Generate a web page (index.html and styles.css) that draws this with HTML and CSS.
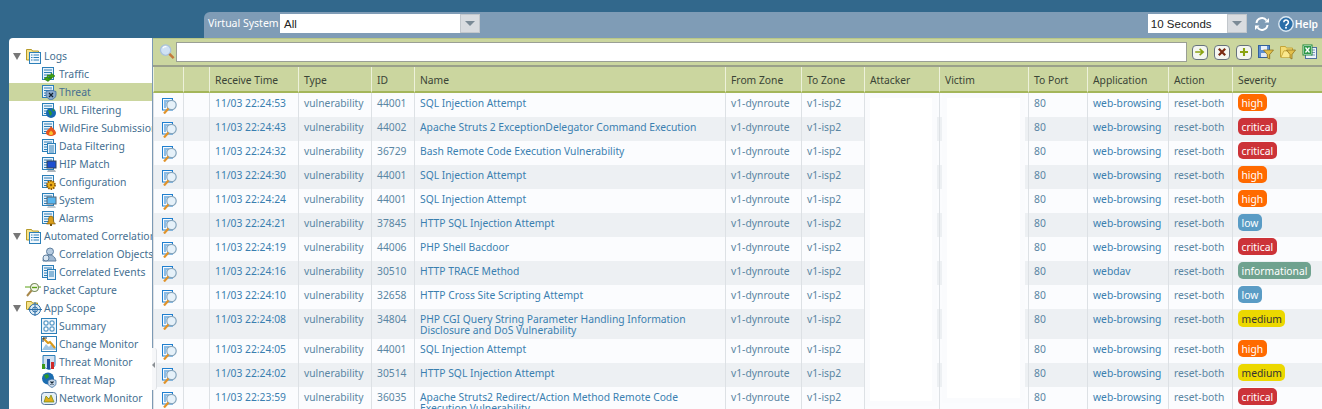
FILE: index.html
```html
<!DOCTYPE html>
<html lang="en">
<head>
<meta charset="utf-8">
<title>Threat Logs</title>
<link rel="stylesheet" href="styles.css">
</head>
<body>
<svg class="defs" width="0" height="0" aria-hidden="true">
  <symbol id="doc" viewBox="0 0 16 16"><rect x="1.5" y="1.5" width="11" height="12" fill="#eaf3fb" stroke="#2c7fb8"/><path d="M3 4h8M3 6.5h8M3 9h8M3 11.5h8" stroke="#2c7fb8"/></symbol>
  <symbol id="folder" viewBox="0 0 16 16"><path d="M.5 3V1.5h5l1 1.500h6v9h-12z" fill="#f6e28a" stroke="#b59a2a"/><rect x="3.500" y="4.500" width="11" height="11" fill="#f2f8fd" stroke="#2c7fb8"/><path d="M5 7h1.500M7.500 7H13M5 9.500h1.500M7.500 9.500H13M5 12h1.500M7.500 12H13" stroke="#2c7fb8"/></symbol>
  <symbol id="mag" viewBox="0 0 16 16"><rect x=".5" y=".5" width="10" height="11.500" fill="#f6fafe" stroke="#1f7fd0"/><path d="M2 3h6M2 5h2.500M2 7h2M2 9h2" stroke="#1f7fd0"/><circle cx="9.500" cy="7" r="4.700" fill="#e6f1f9" stroke="#86a5bc" stroke-width="1.200"/><path d="M6.500 10.500L2 15.500" stroke="#e0932a" stroke-width="2.200"/></symbol>
</svg>

<header class="topbar">
  <div class="vsys">
    <span class="vsys-label">Virtual System</span>
    <div class="combo combo-wide"><span class="combo-text">All</span><span class="combo-btn"></span></div>
    <div class="top-right">
      <div class="combo combo-small"><span class="combo-text">10 Seconds</span><span class="combo-btn"></span></div>
      <svg class="refresh" viewBox="0 0 16 16" width="16" height="16"><path d="M2.500 7a5.500 5.500 0 0 1 10-2.500M13.500 9a5.500 5.500 0 0 1-10 2.500" fill="none" stroke="#fff" stroke-width="2"/><path d="M15 2v4.500h-4.500zM1 14V9.500h4.500z" fill="#fff"/></svg>
      <svg class="help-icon" viewBox="0 0 16 16" width="16" height="16"><circle cx="8" cy="8" r="7.200" fill="#2a6ea8" stroke="#dbe8f2" stroke-width="1.400"/><path d="M5.800 6.200a2.300 2.200 0 1 1 3.400 2c-.9.500-1.200.9-1.200 1.700" fill="none" stroke="#fff" stroke-width="1.600"/><rect x="7.100" y="10.800" width="1.800" height="1.800" fill="#fff"/></svg>
      <span class="help-label">Help</span>
    </div>
  </div>
</header>

<div class="workspace">
  <nav class="sidebar">
    <div class="node lvl1"><span class="twist"></span><svg class="ico"><use href="#folder"/></svg><span>Logs</span></div>
    <div class="node lvl2"><svg class="ico" viewBox="0 0 16 16"><use href="#doc"/><path d="M6 9h4V7l4 3-4 2.500zM11 12H7v-2l-4 3 4 2.500z" fill="#3ea012" stroke="#1f6d06" stroke-width=".5"/></svg><span>Traffic</span></div>
    <div class="node lvl2 active"><svg class="ico" viewBox="0 0 16 16"><use href="#doc"/><path d="M5 7.500l5-1.500 5 1.500v3.500c0 2.500-2.500 4-5 5-2.500-1-5-2.500-5-5z" fill="#8aa9cc" stroke="#3c6ea3" stroke-width=".8"/><path d="M8 9l4 4M12 9l-4 4" stroke="#123" stroke-width="1.200"/></svg><span>Threat</span></div>
    <div class="node lvl2"><svg class="ico" viewBox="0 0 16 16"><use href="#doc"/><circle cx="10" cy="11" r="5" fill="#1668b0"/><path d="M7 8l3 1 1 3-2 2-1-3zM11 6.500l3 2-2 1z" fill="#2e9a2a"/></svg><span>URL Filtering</span></div>
    <div class="node lvl2"><svg class="ico" viewBox="0 0 16 16"><use href="#doc"/><path d="M10 6c1 2 5 4 5 7a5 3 0 0 1-10 0c0-3 4-4 5-7z" fill="#e8531c"/><path d="M10 10.500c.5 1 2 1.500 2 3a2 1.500 0 0 1-4 0c0-1 1.500-2 2-3z" fill="#f7c531"/></svg><span>WildFire Submissions</span></div>
    <div class="node lvl2"><svg class="ico" viewBox="0 0 16 16"><use href="#doc"/><rect x="6.500" y="5.500" width="8" height="10" fill="#e6f1f9" stroke="#2c7fb8"/><path d="M8 8h5M8 10h5M8 12h5M8 14h5" stroke="#2c7fb8"/></svg><span>Data Filtering</span></div>
    <div class="node lvl2"><svg class="ico" viewBox="0 0 16 16"><use href="#doc"/><rect x="6" y="5" width="9" height="7" fill="#1d4fd0" stroke="#345"/><path d="M7 14h7l1 2H6z" fill="#aab4bd"/></svg><span>HIP Match</span></div>
    <div class="node lvl2"><svg class="ico" viewBox="0 0 16 16"><use href="#doc"/><circle cx="10" cy="11" r="4" fill="#efb118" stroke="#8f5a08" stroke-width="1.800" stroke-dasharray="1.500 1"/><circle cx="10" cy="11" r="1.300" fill="#8f5a08"/></svg><span>Configuration</span></div>
    <div class="node lvl2"><svg class="ico" viewBox="0 0 16 16"><use href="#doc"/><rect x="6" y="5" width="9" height="7" fill="#58b5ee" stroke="#567"/><path d="M7 14h7l1 2H6z" fill="#c3cbd2"/></svg><span>System</span></div>
    <div class="node lvl2"><svg class="ico" viewBox="0 0 16 16"><use href="#doc"/><path d="M10 6c2 0 2.500 2 2.500 4 0 2 1 3 2 4H5.500c1-1 2-2 2-4 0-2 .5-4 2.500-4z" fill="#d99d1a" stroke="#7a5408" stroke-width=".6"/><rect x="9" y="14" width="2" height="2" fill="#7a5408"/></svg><span>Alarms</span></div>
    <div class="node lvl1"><span class="twist"></span><svg class="ico"><use href="#folder"/></svg><span>Automated Correlation Engine</span></div>
    <div class="node lvl2"><svg class="ico" viewBox="0 0 16 16"><circle cx="9" cy="5.500" r="3.500" fill="#b6cbe0" stroke="#5f7f9f"/><path d="M2 15c0-5 3-6 6-6s6 1 7 6z" fill="#9fb8d2" stroke="#5f7f9f"/><circle cx="5" cy="12" r="3" fill="#dbe7f2" stroke="#5f7f9f"/></svg><span>Correlation Objects</span></div>
    <div class="node lvl2"><svg class="ico" viewBox="0 0 16 16"><use href="#doc"/><rect x="6.500" y="5.500" width="8" height="10" fill="#e6f1f9" stroke="#2c7fb8"/><path d="M8 8h5M8 10h5M8 12h5" stroke="#2c7fb8"/></svg><span>Correlated Events</span></div>
    <div class="node lvl1 plain"><svg class="ico" viewBox="0 0 16 16"><path d="M0 5h16" stroke="#5aa015"/><circle cx="9.500" cy="5.500" r="4" fill="#f4f8ea" stroke="#7d8f60" stroke-width="1.200"/><path d="M6.500 8.500L2 14" stroke="#a8884a" stroke-width="2"/><path d="M7 5.500h5" stroke="#5aa015" stroke-width="1.400"/></svg><span>Packet Capture</span></div>
    <div class="node lvl1"><span class="twist"></span><svg class="ico" viewBox="0 0 16 16"><path d="M.5 9V1.500h5l1 1.500h5v3h-7l-3 4z" fill="#f6e28a" stroke="#b59a2a"/><circle cx="9" cy="9.500" r="5.500" fill="#dcebf5" stroke="#2c6ea8"/><path d="M9 2v15M2 9.500h14" stroke="#2c6ea8"/><circle cx="9" cy="9.500" r="2.500" fill="none" stroke="#2c6ea8"/></svg><span>App Scope</span></div>
    <div class="node lvl2"><svg class="ico" viewBox="0 0 16 16"><rect x=".5" y=".5" width="15" height="15" fill="#eef5fb" stroke="#2c7fb8"/><rect x="3" y="3" width="4" height="4" rx="1" fill="#fff" stroke="#2c7fb8"/><rect x="9" y="3" width="4" height="4" rx="1" fill="#fff" stroke="#2c7fb8"/><rect x="3" y="9" width="4" height="4" rx="1" fill="#fff" stroke="#2c7fb8"/><rect x="9" y="9" width="4" height="4" rx="1" fill="#fff" stroke="#2c7fb8"/></svg><span>Summary</span></div>
    <div class="node lvl2"><svg class="ico" viewBox="0 0 16 16"><rect x=".5" y=".5" width="15" height="15" fill="#fff" stroke="#2c7fb8"/><path d="M1 14l4-6 3 3 3-4 4 5v2H1z" fill="#9fc6e4"/><path d="M2 2l5 5 2-1 5 6" fill="none" stroke="#d99a1a" stroke-width="2"/><path d="M2 2l4 0M2 2l0 4" stroke="#234" stroke-width="1"/></svg><span>Change Monitor</span></div>
    <div class="node lvl2"><svg class="ico" viewBox="0 0 16 16"><path d="M2 1.500h12v9c0 2.500-3 4-6 5-3-1-6-2.500-6-5z" fill="#cfe0f0" stroke="#2c7fb8"/><rect x="1" y="10" width="3" height="5" fill="#3c9a1a"/><rect x="6" y="5" width="3" height="10" fill="#1d4fa0"/><rect x="10" y="8" width="3" height="7" fill="#cf2a2a"/></svg><span>Threat Monitor</span></div>
    <div class="node lvl2"><svg class="ico" viewBox="0 0 16 16"><circle cx="7" cy="6.500" r="6" fill="#1a6cb0"/><path d="M3 3l4-1 1 3-3 2zM8 8l3 0 0 3-2 1z" fill="#2e9a2a"/><path d="M7 8.500l4-1.500 4 1.500v3c0 2-2 3-4 4-2-1-4-2-4-4z" fill="#c9d9ea" stroke="#3c6ea3" stroke-width=".8"/><path d="M9.500 9.500l3 3M12.500 9.500l-3 3" stroke="#123" stroke-width="1.200"/></svg><span>Threat Map</span></div>
    <div class="node lvl2"><svg class="ico" viewBox="0 0 16 16"><rect x=".5" y="2.500" width="15" height="12" rx="3" fill="#e5eef6" stroke="#55779a"/><path d="M3 12l2-6 3 3 2-4 3 7z" fill="#e3ad1a" stroke="#6a8a12" stroke-width=".7"/></svg><span>Network Monitor</span></div>
    <span class="collapse"></span>
  </nav>

  <main class="content">
    <div class="searchbar">
      <svg class="search-ico" viewBox="0 0 18 18" width="17" height="18"><circle cx="7" cy="7" r="5.500" fill="#cfe1f4" stroke="#a9c2dc" stroke-width="1.400"/><path d="M4 5a3.500 3.500 0 0 1 4-1.500" fill="none" stroke="#fff" stroke-width="1.200"/><path d="M11 11l4.500 4.500" stroke="#c4793a" stroke-width="2.600"/></svg>
      <div class="search-input"></div>
      <div class="tools">
        <span class="tbtn"><svg viewBox="0 0 12 10" width="12" height="10"><path d="M0 5h9M5.500 1L10 5 5.500 9" fill="none" stroke="#8aa312" stroke-width="2"/></svg></span>
        <span class="tbtn"><svg viewBox="0 0 12 10" width="12" height="10"><path d="M2 1l8 8M10 1L2 9" stroke="#7a2a12" stroke-width="2.800"/></svg></span>
        <span class="tbtn"><svg viewBox="0 0 12 10" width="12" height="10"><path d="M6 0v10M1 5h10" stroke="#8aa312" stroke-width="2.600"/></svg></span>
        <svg class="tico" viewBox="0 0 16 16"><rect x=".5" y="1.500" width="11" height="12" fill="#5d8fd0" stroke="#33609c"/><rect x="3" y="2" width="6" height="4" fill="#eaf1fa"/><rect x="3" y="9" width="6" height="4" fill="#dfe8f3"/><path d="M5.500 6h10l-3.800 4.500V15l-2.400-1.200v-3.300z" fill="#e3c04a" stroke="#866a18" stroke-width=".7"/></svg>
        <svg class="tico" viewBox="0 0 16 16"><path d="M.5 13V2.500h5l1 1.500h6v3H4l-2.500 6z" fill="#f4dc74" stroke="#c4a53a"/><path d="M1 13.500L3.800 7H13l-2 6.500z" fill="#fbe98e" stroke="#c4a53a" stroke-width=".7"/><path d="M6.500 6h9l-3.500 4.500V15l-2-1.200v-3.300z" fill="#e3c04a" stroke="#866a18" stroke-width=".7"/></svg>
        <svg class="tico" viewBox="0 0 16 16"><rect x="3.500" y="3.500" width="11" height="11" fill="#eef4fb" stroke="#4f6fa0"/><path d="M9 6h4M9 8.500h4M9 11h4" stroke="#7a96bd"/><rect x="1" y="1" width="9" height="10" fill="#fff" stroke="#1f8a3a"/><rect x="2" y="2" width="7" height="8" fill="#2f9a4a"/><path d="M3.500 3.500l4 5M7.500 3.500l-4 5" stroke="#fff" stroke-width="1.300"/></svg>
      </div>
    </div>

    <div class="grid-wrap">
      <table class="grid">
        <colgroup>
          <col class="c1"><col class="c2"><col class="c3"><col class="c4"><col class="c5"><col class="c6"><col class="c7"><col class="c8"><col class="c9"><col class="c10"><col class="c11"><col class="c12"><col class="c13"><col class="c14">
        </colgroup>
        <thead>
          <tr><th></th><th></th><th>Receive Time</th><th>Type</th><th>ID</th><th>Name</th><th>From Zone</th><th>To Zone</th><th>Attacker</th><th>Victim</th><th>To Port</th><th>Application</th><th>Action</th><th>Severity</th></tr>
        </thead>
        <tbody>
          <tr><td class="ic"><svg class="ico"><use href="#mag"/></svg></td><td></td><td class="link">11/03 22:24:53</td><td>vulnerability</td><td>44001</td><td class="link">SQL Injection Attempt</td><td>v1-dynroute</td><td>v1-isp2</td><td></td><td></td><td>80</td><td class="link">web-browsing</td><td>reset-both</td><td class="sevcell"><span class="sev high">high</span></td></tr>
          <tr><td class="ic"><svg class="ico"><use href="#mag"/></svg></td><td></td><td class="link">11/03 22:24:43</td><td>vulnerability</td><td>44002</td><td class="link">Apache Struts 2 ExceptionDelegator Command Execution</td><td>v1-dynroute</td><td>v1-isp2</td><td></td><td></td><td>80</td><td class="link">web-browsing</td><td>reset-both</td><td class="sevcell"><span class="sev critical">critical</span></td></tr>
          <tr><td class="ic"><svg class="ico"><use href="#mag"/></svg></td><td></td><td class="link">11/03 22:24:32</td><td>vulnerability</td><td>36729</td><td class="link">Bash Remote Code Execution Vulnerability</td><td>v1-dynroute</td><td>v1-isp2</td><td></td><td></td><td>80</td><td class="link">web-browsing</td><td>reset-both</td><td class="sevcell"><span class="sev critical">critical</span></td></tr>
          <tr><td class="ic"><svg class="ico"><use href="#mag"/></svg></td><td></td><td class="link">11/03 22:24:30</td><td>vulnerability</td><td>44001</td><td class="link">SQL Injection Attempt</td><td>v1-dynroute</td><td>v1-isp2</td><td></td><td></td><td>80</td><td class="link">web-browsing</td><td>reset-both</td><td class="sevcell"><span class="sev high">high</span></td></tr>
          <tr><td class="ic"><svg class="ico"><use href="#mag"/></svg></td><td></td><td class="link">11/03 22:24:24</td><td>vulnerability</td><td>44001</td><td class="link">SQL Injection Attempt</td><td>v1-dynroute</td><td>v1-isp2</td><td></td><td></td><td>80</td><td class="link">web-browsing</td><td>reset-both</td><td class="sevcell"><span class="sev high">high</span></td></tr>
          <tr><td class="ic"><svg class="ico"><use href="#mag"/></svg></td><td></td><td class="link">11/03 22:24:21</td><td>vulnerability</td><td>37845</td><td class="link">HTTP SQL Injection Attempt</td><td>v1-dynroute</td><td>v1-isp2</td><td></td><td></td><td>80</td><td class="link">web-browsing</td><td>reset-both</td><td class="sevcell"><span class="sev low">low</span></td></tr>
          <tr><td class="ic"><svg class="ico"><use href="#mag"/></svg></td><td></td><td class="link">11/03 22:24:19</td><td>vulnerability</td><td>44006</td><td class="link">PHP Shell Bacdoor</td><td>v1-dynroute</td><td>v1-isp2</td><td></td><td></td><td>80</td><td class="link">web-browsing</td><td>reset-both</td><td class="sevcell"><span class="sev critical">critical</span></td></tr>
          <tr><td class="ic"><svg class="ico"><use href="#mag"/></svg></td><td></td><td class="link">11/03 22:24:16</td><td>vulnerability</td><td>30510</td><td class="link">HTTP TRACE Method</td><td>v1-dynroute</td><td>v1-isp2</td><td></td><td></td><td>80</td><td class="link">webdav</td><td>reset-both</td><td class="sevcell"><span class="sev info">informational</span></td></tr>
          <tr><td class="ic"><svg class="ico"><use href="#mag"/></svg></td><td></td><td class="link">11/03 22:24:10</td><td>vulnerability</td><td>32658</td><td class="link">HTTP Cross Site Scripting Attempt</td><td>v1-dynroute</td><td>v1-isp2</td><td></td><td></td><td>80</td><td class="link">web-browsing</td><td>reset-both</td><td class="sevcell"><span class="sev low">low</span></td></tr>
          <tr class="tall"><td class="ic"><svg class="ico"><use href="#mag"/></svg></td><td></td><td class="link">11/03 22:24:08</td><td>vulnerability</td><td>34804</td><td class="link">PHP CGI Query String Parameter Handling Information Disclosure and DoS Vulnerability</td><td>v1-dynroute</td><td>v1-isp2</td><td></td><td></td><td>80</td><td class="link">web-browsing</td><td>reset-both</td><td class="sevcell"><span class="sev medium">medium</span></td></tr>
          <tr><td class="ic"><svg class="ico"><use href="#mag"/></svg></td><td></td><td class="link">11/03 22:24:05</td><td>vulnerability</td><td>44001</td><td class="link">SQL Injection Attempt</td><td>v1-dynroute</td><td>v1-isp2</td><td></td><td></td><td>80</td><td class="link">web-browsing</td><td>reset-both</td><td class="sevcell"><span class="sev high">high</span></td></tr>
          <tr><td class="ic"><svg class="ico"><use href="#mag"/></svg></td><td></td><td class="link">11/03 22:24:02</td><td>vulnerability</td><td>30514</td><td class="link">HTTP SQL Injection Attempt</td><td>v1-dynroute</td><td>v1-isp2</td><td></td><td></td><td>80</td><td class="link">web-browsing</td><td>reset-both</td><td class="sevcell"><span class="sev medium">medium</span></td></tr>
          <tr class="tall"><td class="ic"><svg class="ico"><use href="#mag"/></svg></td><td></td><td class="link">11/03 22:23:59</td><td>vulnerability</td><td>36035</td><td class="link">Apache Struts2 Redirect/Action Method Remote Code Execution Vulnerability</td><td>v1-dynroute</td><td>v1-isp2</td><td></td><td></td><td>80</td><td class="link">web-browsing</td><td>reset-both</td><td class="sevcell"><span class="sev critical">critical</span></td></tr>
        </tbody>
      </table>
      <div class="redact redact-a"></div>
      <div class="redact redact-b"></div>
    </div>
  </main>
</div>
</body>
</html>
```
FILE: styles.css
```css
* { box-sizing: border-box; }
html, body { margin: 0; height: 100%; }
body {
  width: 1322px;
  height: 409px;
  overflow: hidden;
  background: #32688c;
  font-family: "Noto Sans", "DejaVu Sans", sans-serif;
  font-size: 10.3px;
  color: #3b4a55;
  padding-top: 12px;
}
.defs { position: absolute; }
.topbar { padding-left: 204px; height: 26px; }
.vsys {
  height: 26px;
  display: flex;
  align-items: flex-start;
  background: #7f9cb6;
  border-top-left-radius: 6px;
  padding: 2px 0 0 4px;
}
.vsys-label { color: #fff; width: 72px; line-height: 18px; font-size: 10.5px; }
.combo { display: flex; height: 19px; background: #fff; }
.combo-wide { width: 200px; }
.combo-wide .combo-text { padding-left: 4px; }
.combo-small { width: 99px; }
.combo-text { flex: 1; padding: 3px 3px; color: #222; font-family: "Liberation Sans", sans-serif; font-size: 11.5px; line-height: 14px; }
.combo-btn { width: 20px; background: #d9dce0; position: relative; border: 1px solid #c2c7cc; }
.combo-btn::after {
  content: "";
  position: absolute;
  left: 4px;
  top: 6px;
  border-left: 5px solid transparent;
  border-right: 5px solid transparent;
  border-top: 5px solid #7b8a96;
}
.top-right { margin-left: auto; display: flex; align-items: center; height: 19px; }
.refresh { margin-left: 7px; }
.help-icon { margin-left: 8px; }
.help-label { color: #fff; margin-left: 1px; margin-right: 4px; font-weight: 600; font-size: 10.3px; }

.workspace { display: flex; padding-left: 9px; height: 371px; }
.sidebar {
  width: 144px;
  background: #fff;
  border-top-left-radius: 4px;
  border-right: 1px solid #7d9ab5;
  padding-top: 9px;
  position: relative;
  font-size: 10.4px;
  color: #456f91;
  white-space: nowrap;
  flex: none;
}
.node { height: 18px; display: flex; align-items: center; gap: 2px; overflow: hidden; }
.lvl1 { padding-left: 4px; }
.lvl1.plain { padding-left: 16px; }
.lvl2 { padding-left: 32px; }
.active { background: #cbd69f; }
.twist {
  flex: none;
  width: 0;
  height: 0;
  margin-right: 3px;
  border-left: 4.500px solid transparent;
  border-right: 4.500px solid transparent;
  border-top: 7px solid #777;
}
.ico { width: 16px; height: 16px; flex: none; }
.collapse {
  position: absolute;
  z-index: 2;
  right: -5px;
  top: 310px;
  width: 5px;
  height: 42px;
  background: #f6f7f9;
  border-right: 1px solid #dfe2e6;
  border-top-right-radius: 3px;
  border-bottom-right-radius: 3px;
}
.collapse::after {
  content: "";
  position: absolute;
  left: 0;
  top: 14px;
  border-top: 3px solid transparent;
  border-bottom: 3px solid transparent;
  border-right: 3px solid #8a8f94;
}

.content { flex: 1; min-width: 0; background: #fbfcfe; overflow: hidden; }
.searchbar {
  height: 29px;
  background: #cbd69f;
  border-top: 1px solid #b9c685;
  display: flex;
  align-items: center;
  padding: 0 0 0 6px;
  border-bottom: 2px solid #9aa08a;
}
.search-ico { flex: none; }
.search-input {
  width: 1011px;
  height: 20px;
  background: #fff;
  border: 1px solid #9a9f95;
}
.tools { display: flex; align-items: center; margin-left: 5px; gap: 6px; }
.tbtn {
  width: 16px;
  height: 15px;
  border: 1px solid #66727c;
  border-radius: 4px;
  background: #f4f6f0;
  display: flex;
  align-items: center;
  justify-content: center;
}
.tbtn svg { width: 10px; height: 8px; }
.tico { width: 16px; height: 16px; flex: none; }

.grid-wrap { position: relative; }
.grid { width: 1169px; table-layout: fixed; border-collapse: separate; border-spacing: 0; }
.c1 { width: 30px; }
.c2 { width: 26px; }
.c3 { width: 89px; }
.c4 { width: 73px; }
.c5 { width: 43px; }
.c6 { width: 311px; }
.c7 { width: 76px; }
.c8 { width: 63px; }
.c9 { width: 75px; }
.c10 { width: 89px; }
.c11 { width: 59px; }
.c12 { width: 81px; }
.c13 { width: 64px; }
.c14 { width: 90px; }
th {
  height: 26px;
  background: #cbd69f;
  border-left: 1px solid #edf1da;
  border-bottom: 2px solid #a4b65a;
  font-weight: 400;
  color: #3a4436;
  text-align: left;
  padding: 1px 5px 0;
}
td {
  height: 24px;
  padding: 5px 5px 0;
  vertical-align: top;
  border-left: 1px solid #dde1e5;
  color: #5a86a3;
  line-height: 11px;
  overflow: hidden;
  white-space: nowrap;
}
td:nth-child(6) { white-space: normal; }
.link { color: #3a7fb0; }
tbody tr:nth-child(even) td { background: #edf0f3; }
.tall td { height: 30px; }
td.ic { padding: 5px 0 0 8px; }
.ic .ico { display: block; }
td.sevcell { padding-top: 1px; }
.sev {
  display: inline-block;
  height: 17px;
  line-height: 18px;
  padding: 0 3.500px;
  border-radius: 5px;
  color: #fff;
}
.high { background: #ff6a00; }
.critical { background: #cc3338; }
.low { background: #5a9cc5; }
.info { background: #6fa28f; }
.medium { background: #ecd800; color: #333; }
.redact {
  position: absolute;
  top: 26px;
  background: #fff;
  border: 5px solid #fafbfd;
}
.redact-a { left: 712px; width: 72px; height: 313px; }
.redact-b { left: 789px; width: 83px; height: 310px; }
```
